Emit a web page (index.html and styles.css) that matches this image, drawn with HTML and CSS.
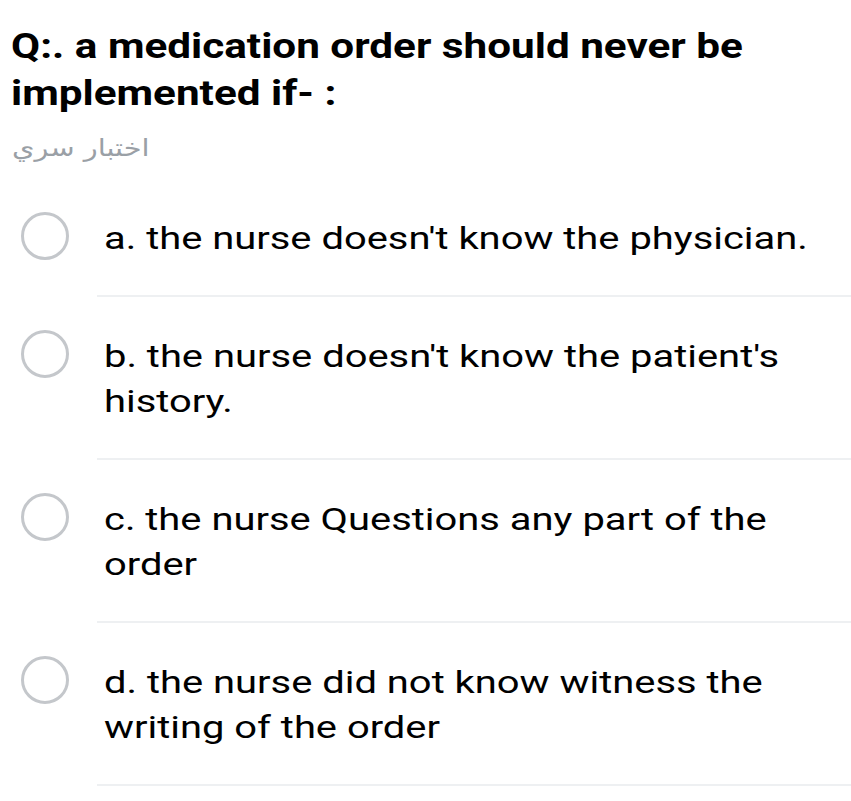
FILE: index.html
```html
<!DOCTYPE html>
<html lang="en">
<head>
<meta charset="utf-8">
<title>Question</title>
<link rel="stylesheet" href="styles.css">
</head>
<body>
<main class="quiz">
  <h1 class="question"><span class="question-text">Q:. a medication order should never be implemented if- :</span></h1>
  <div class="subtitle"><span class="subtitle-text" dir="rtl">اختبار سري</span></div>
  <ul class="options">
    <li class="option">
      <span class="radio-cell"><span class="radio"></span></span>
      <span class="option-body"><span class="option-text">a. the nurse doesn't know the physician.</span></span>
    </li>
    <li class="option">
      <span class="radio-cell"><span class="radio"></span></span>
      <span class="option-body"><span class="option-text">b. the nurse doesn't know the patient's history.</span></span>
    </li>
    <li class="option">
      <span class="radio-cell"><span class="radio"></span></span>
      <span class="option-body"><span class="option-text">c. the nurse Questions any part of the order</span></span>
    </li>
    <li class="option">
      <span class="radio-cell"><span class="radio"></span></span>
      <span class="option-body"><span class="option-text">d. the nurse did not know witness the writing of the order</span></span>
    </li>
  </ul>
</main>
</body>
</html>
```
FILE: styles.css
```css
html, body {
  margin: 0;
  padding: 0;
  background: #ffffff;
}

body {
  font-family: Roboto, "DejaVu Sans", sans-serif;
  color: #000000;
}

.quiz {
  width: 851px;
  overflow: hidden;
}

.question {
  margin: 23px 0 0 0;
  padding: 0 0 0 11px;
  font-size: 35px;
  line-height: 47px;
  font-weight: 700;
}

.question-text {
  display: block;
  width: 680px;
  transform: scaleX(1.207);
  transform-origin: left top;
}

.subtitle {
  margin-top: 15px;
  padding-left: 12px;
  font-family: "DejaVu Sans", sans-serif;
  font-size: 24px;
  line-height: 32px;
  color: #9aa0a6;
}

.subtitle-text {
  display: inline-block;
  transform: scaleX(1.2);
  transform-origin: left top;
}

.options {
  list-style: none;
  margin: 15px 0 0 0;
  padding: 0;
}

.option {
  display: flex;
  align-items: stretch;
}

.radio-cell {
  flex: 0 0 97px;
  padding-top: 33px;
  box-sizing: border-box;
}

.radio {
  display: block;
  width: 48px;
  height: 48px;
  margin-left: 21px;
  box-sizing: border-box;
  border: 3px solid #c4c7cb;
  border-radius: 50%;
}

.option-body {
  flex: 1;
  padding: 37px 0 34px 7px;
  font-size: 32px;
  line-height: 45px;
  border-bottom: 2px solid #eef0f2;
}

.option-text {
  display: block;
  width: 580px;
  transform: scaleX(1.247);
  transform-origin: left top;
}
```
